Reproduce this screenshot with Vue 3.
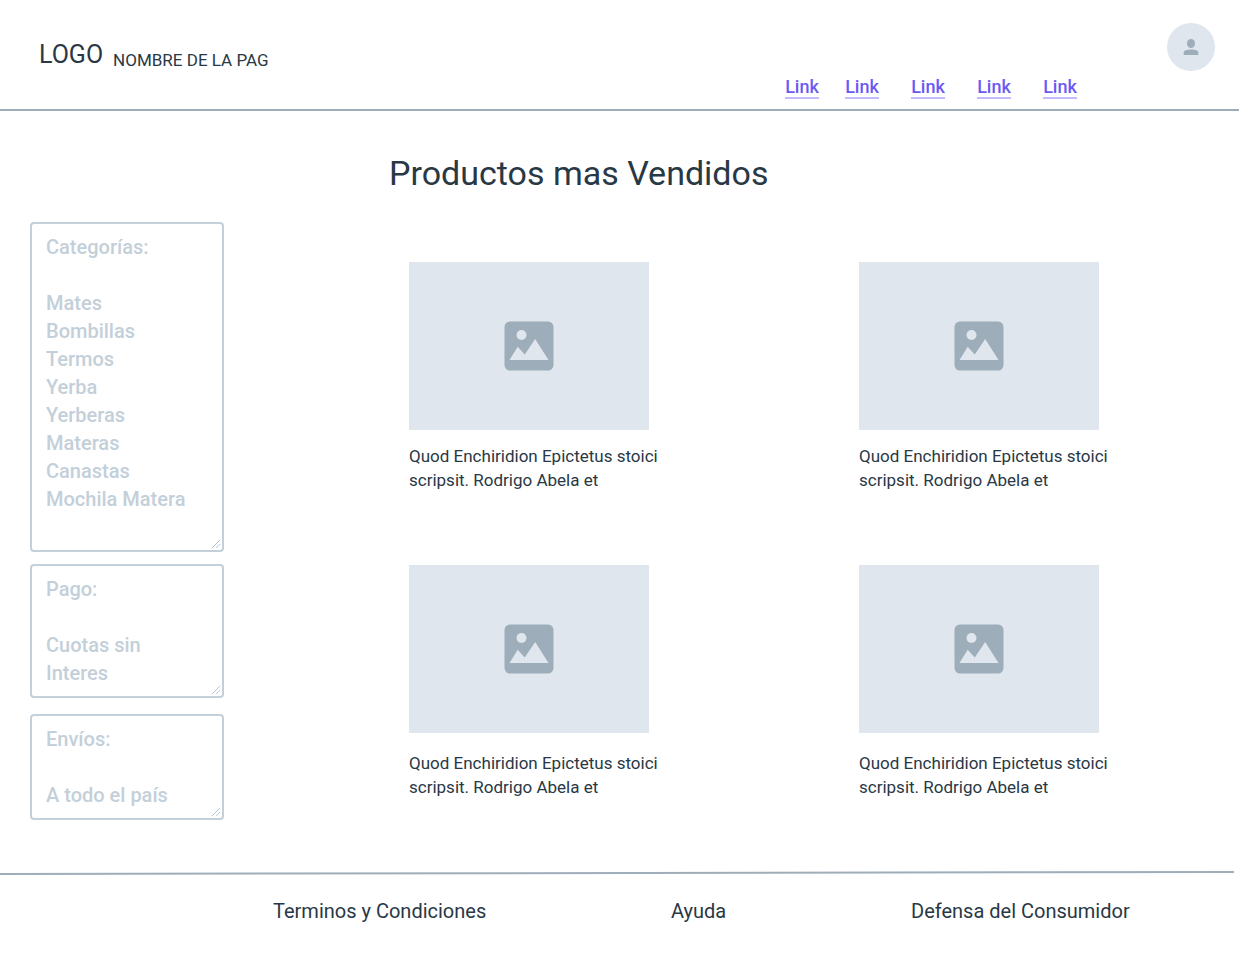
<script setup>
import { ref } from 'vue'

const links = ['Link', 'Link', 'Link', 'Link', 'Link']

const filters = ref([
  {
    id: 'categorias',
    label: 'Categorías',
    rows: 11,
    text: 'Categorías:\n\nMates\nBombillas\nTermos\nYerba\nYerberas\nMateras\nCanastas\nMochila Matera',
  },
  { id: 'pago', label: 'Pago', rows: 4, text: 'Pago:\n\nCuotas sin\nInteres' },
  { id: 'envios', label: 'Envíos', rows: 3, text: 'Envíos:\n\nA todo el país' },
])

const description = 'Quod Enchiridion Epictetus stoici scripsit. Rodrigo Abela et'
const productRows = [
  { id: 'first', items: [1, 2] },
  { id: 'second', items: [3, 4] },
]

const footerLinks = ['Terminos y Condiciones', 'Ayuda', 'Defensa del Consumidor']
</script>

<template>
  <div class="page">
    <header class="header">
      <div class="brand">
        <span class="logo">LOGO</span>
        <span class="name">NOMBRE DE LA PAG</span>
      </div>
      <nav class="nav">
        <a v-for="(link, i) in links" :key="i" class="nav-link" href="#">{{ link }}</a>
      </nav>
      <button class="avatar" type="button" aria-label="Mi cuenta">
        <svg width="16" height="18" viewBox="0 0 16 18" aria-hidden="true">
          <ellipse cx="8" cy="5.5" rx="4" ry="4.5" />
          <path d="M.7 17v-2.200C.7 12.600 3.500 11.500 8 11.500s7.300 1.100 7.300 3.300V17z" />
        </svg>
      </button>
    </header>

    <h1 class="title">Productos mas Vendidos</h1>

    <div class="content">
      <aside class="sidebar">
        <div v-for="f in filters" :key="f.id" class="field" :class="f.id">
          <textarea v-model="f.text" class="area" :rows="f.rows" :aria-label="f.label" spellcheck="false"></textarea>
          <svg class="grip" width="10" height="10" viewBox="0 0 10 10" aria-hidden="true">
            <path d="M.8 9.200L9.200.8M5 9.200L9.200 5" />
          </svg>
        </div>
      </aside>

      <main class="products">
        <div v-for="row in productRows" :key="row.id" class="row" :class="row.id">
          <article v-for="item in row.items" :key="item" class="card">
            <div class="picture">
              <svg width="50" height="50" viewBox="0 0 50 50" role="img" aria-label="Imagen">
                <rect class="frame" x=".5" y=".5" width="49" height="49" rx="5.500" />
                <circle class="cut" cx="17.500" cy="14" r="5" />
                <path class="cut" d="M5.500 39L13.700 25.800L20.700 33.500L31.200 18L44.500 39z" />
              </svg>
            </div>
            <p class="caption">{{ description }}</p>
          </article>
        </div>
      </main>
    </div>

    <footer class="footer">
      <svg class="rule" viewBox="0 0 1239 4" preserveAspectRatio="none" aria-hidden="true">
        <line x1="0" y1="3" x2="1234" y2="1" />
      </svg>
      <nav class="footer-nav">
        <a v-for="link in footerLinks" :key="link" class="footer-link" href="#">{{ link }}</a>
      </nav>
    </footer>
  </div>
</template>

<style>
body {
  background: #fff;
}
</style>

<style scoped>
.page {
  font-family: Roboto, "Liberation Sans", sans-serif;
  color: #293845;
}

.header {
  display: flex;
  align-items: flex-start;
  padding: 23px 24px 10px 39px;
  border-bottom: 2px solid #9eadba;
}

.brand {
  display: flex;
  align-items: flex-end;
  gap: 10px;
  padding-top: 17px;
  white-space: nowrap;
}

.logo {
  font-size: 25px;
  line-height: 30px;
}

.name {
  font-size: 17px;
  line-height: 20px;
}

.nav {
  display: flex;
  gap: 32px;
  margin: 54px 90px 0 auto;
}

.nav-link {
  min-width: 34px;
  font-size: 18px;
  font-weight: 500;
  line-height: 20px;
  text-align: center;
  text-decoration: none;
  color: #6b59f2;
  border-bottom: 2px solid #c3bcfa;
}

.nav-link:first-child {
  margin-right: -6px;
}

.avatar {
  display: flex;
  align-items: center;
  justify-content: center;
  width: 48px;
  height: 48px;
  padding: 0;
  border: 0;
  border-radius: 50%;
  background: #dfe6ed;
  fill: #9eadba;
}

.title {
  margin: 38px 0 25px;
  padding-left: 389px;
  font-size: 34px;
  font-weight: 400;
  line-height: 48px;
}

.content {
  display: flex;
  gap: 185px;
  padding-left: 30px;
}

.sidebar {
  flex: 0 0 194px;
  display: flex;
  flex-direction: column;
  gap: 12px;
}

.field {
  position: relative;
}

.envios {
  margin-top: 4px;
}

.area {
  display: block;
  box-sizing: border-box;
  width: 100%;
  margin: 0;
  padding: 9px 14px;
  border: 2px solid #c3cfd9;
  border-radius: 4px;
  background: transparent;
  color: #c3cfd9;
  font-family: inherit;
  font-size: 20px;
  font-weight: 500;
  line-height: 28px;
  overflow: hidden;
  resize: none;
}

.grip {
  position: absolute;
  right: 3px;
  bottom: 3px;
  fill: none;
  stroke: #b9c6d1;
}

.products {
  flex: 1;
  display: flex;
  flex-direction: column;
  gap: 73px;
  padding-top: 40px;
}

.row {
  display: grid;
  grid-template-columns: 1fr 1fr;
  column-gap: 70px;
}

.card {
  display: flex;
  flex-direction: column;
  gap: 14px;
}

.second .card {
  gap: 18px;
}

.picture {
  display: flex;
  align-items: center;
  justify-content: center;
  width: 240px;
  height: 168px;
  background: #dfe6ed;
}

.frame {
  fill: #9eadba;
}

.cut {
  fill: #dfe6ed;
}

.caption {
  max-width: 280px;
  margin: 0;
  font-size: 17px;
  line-height: 24px;
}

.footer {
  margin-top: 51px;
}

.rule {
  display: block;
  width: 100%;
  height: 4px;
}

.rule line {
  stroke: #9eadba;
  stroke-width: 2;
}

.footer-nav {
  display: grid;
  grid-template-columns: 398fr 240fr 328fr;
  padding: 22px 0 35px 273px;
}

.footer-link {
  justify-self: start;
  font-size: 20px;
  line-height: 28px;
  text-decoration: none;
  color: #293845;
}
</style>
